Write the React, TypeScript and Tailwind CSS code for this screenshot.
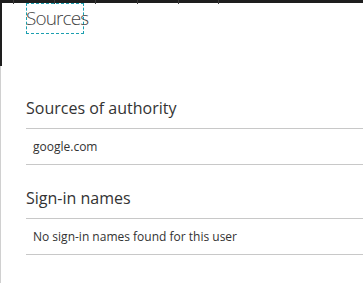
const sections = [
  { title: "Sources of authority", value: "google.com" },
  { title: "Sign-in names", value: "No sign-in names found for this user" },
];

function Section({ title, value }: { title: string; value: string }) {
  return (
    <div className="pl-[26px]">
      <div className="h-[40px] flex items-center text-[16px] text-[#333] leading-none">
        {title}
      </div>
      <div className="border-t border-b border-[#c8c8c8] h-[37px] flex items-center pl-[7px] text-[12px] text-[#333]">
        {value}
      </div>
    </div>
  );
}

export default function App() {
  return (
    <div
      className="w-[363px] h-[283px] bg-white overflow-hidden relative"
      style={{ fontFamily: '"Open Sans", "Noto Sans", sans-serif' }}
    >
      <div className="h-[3px] bg-[#1e1e1e] flex">
        {[13, 54, 95, 137, 178, 218].map((x) => (
          <div key={x} className="absolute top-0 w-px h-[4px] bg-[#3a3a3a]" style={{ left: x }} />
        ))}
      </div>
      <div className="absolute left-0 top-0 w-[2px] h-[66px] bg-[#1e1e1e]" />
      <div className="absolute left-0 top-[66px] w-px h-[217px] bg-[#d0d0d0]" />
      <div className="pl-[26px] flex">
        <div className="border border-dashed border-[#1b9fb0] h-[31px] w-[58px]">
          <span className="block text-[19px] font-light text-[#444] leading-[29px] -ml-[1px] tracking-[-0.9px] whitespace-nowrap">
            Sources
          </span>
        </div>
      </div>
      <div className="h-[54px]" />
      <div className="flex flex-col gap-[13px]">
        {sections.map((s) => (
          <Section key={s.title} title={s.title} value={s.value} />
        ))}
      </div>
    </div>
  );
}
